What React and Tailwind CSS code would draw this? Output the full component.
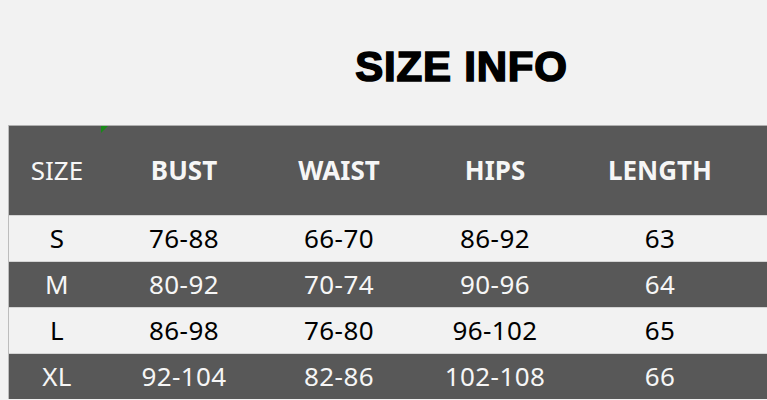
const cols = ["w-[96px]", "w-[158px]", "w-[152px]", "w-[160px]", "w-[170px]"];

const rows = [
  ["S", "76-88", "66-70", "86-92", "63"],
  ["M", "80-92", "70-74", "90-96", "64"],
  ["L", "86-98", "76-80", "96-102", "65"],
  ["XL", "92-104", "82-86", "102-108", "66"],
];

const headers = ["SIZE", "BUST", "WAIST", "HIPS", "LENGTH"];

export default function App() {
  return (
    <div className="w-[767px] h-[400px] overflow-hidden bg-[#f2f2f2] font-['Noto_Sans',sans-serif]">
      <div className="pt-[46px] mb-[37px] flex justify-center">
        <h1 className="ml-[156px] text-[42px] leading-[42px] font-bold text-black tracking-[0.8px] font-['Liberation_Sans',Arial,sans-serif] [-webkit-text-stroke:1.6px_black]">
          SIZE INFO
        </h1>
      </div>

      <div className="ml-[8px] border-l border-[#bdbdbd]">
        {/* header */}
        <div className="relative h-[90px] flex items-center bg-[#585858] border-t border-[#b0b0b0] text-[#f6f6f6] text-[26px]">
          <span className="absolute left-[92px] top-0 w-0 h-0 border-t-[7px] border-t-[#1a8a1a] border-r-[7px] border-r-transparent" />
          {headers.map((h, i) => (
            <div key={h} className={`${cols[i]} text-center ${i === 0 ? "font-normal" : "font-bold"}`}>
              {h}
            </div>
          ))}
        </div>

        {/* rows */}
        {rows.map((r, ri) => (
          <div
            key={r[0]}
            className={`h-[46px] flex items-center border-t border-[#d4d4d4] text-[26px] tracking-[0.4px] ${
              ri % 2 === 1 ? "bg-[#585858] text-[#f6f6f6]" : "bg-[#f2f2f2] text-black"
            }`}
          >
            {r.map((c, i) => (
              <div key={i} className={`${cols[i]} text-center`}>
                {c}
              </div>
            ))}
          </div>
        ))}
      </div>
    </div>
  );
}
